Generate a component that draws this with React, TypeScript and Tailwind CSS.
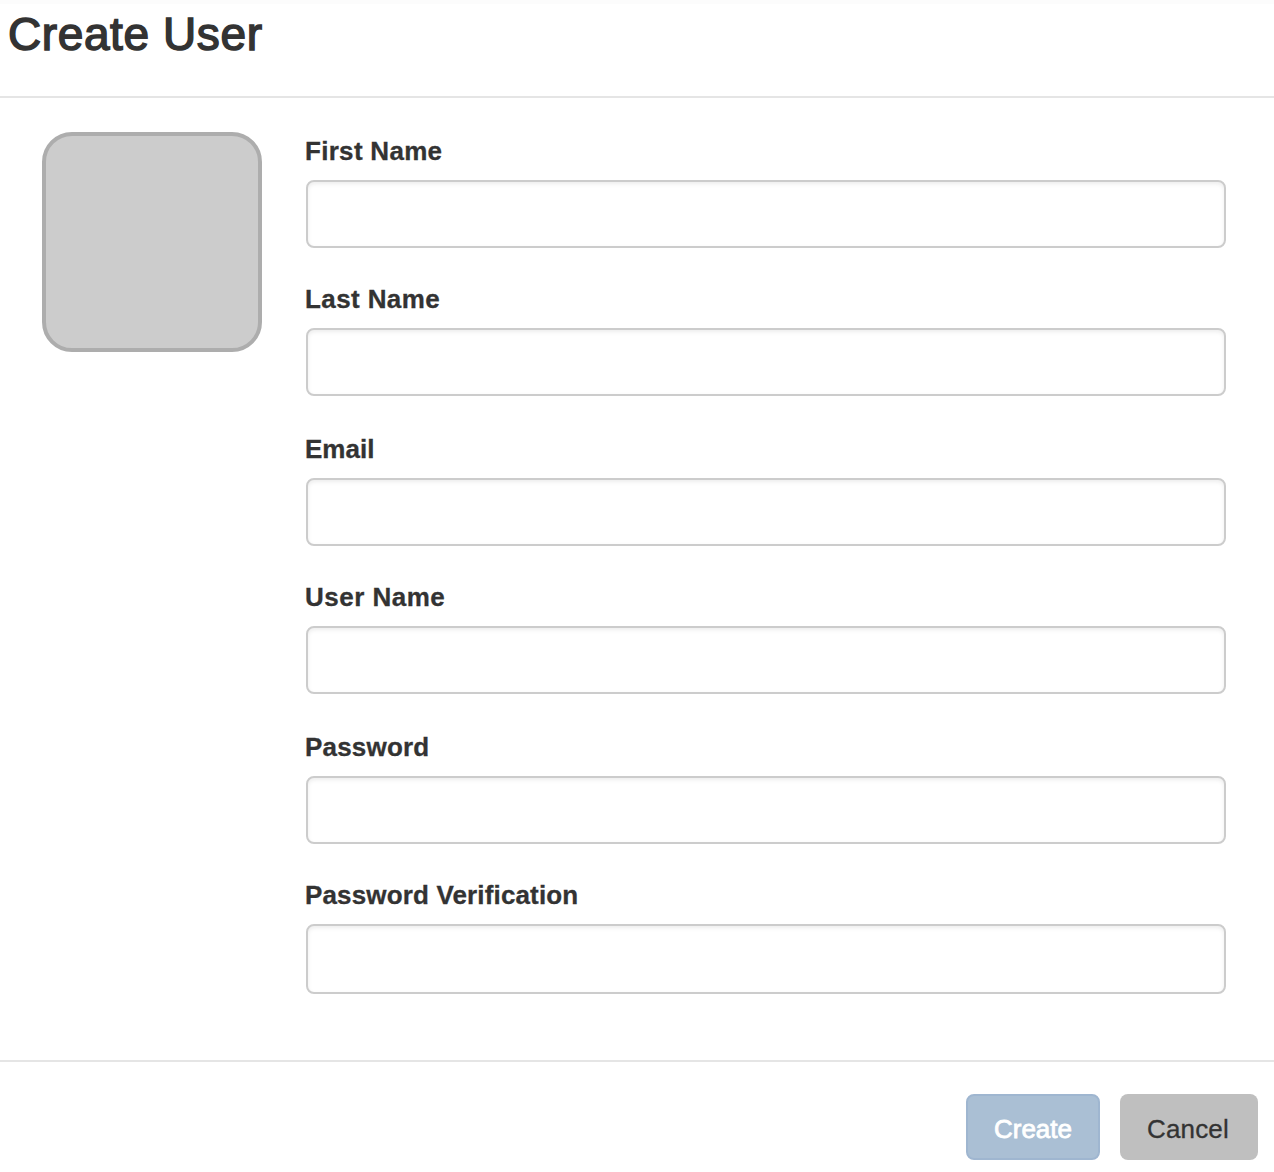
const fields = [
  { id: 'first', label: 'First Name', type: 'text', box: 'mb-8', tracking: 'tracking-[0.3px]', height: 'h-17' },
  { id: 'last', label: 'Last Name', type: 'text', box: 'mb-[34px]', tracking: 'tracking-[0.4px]', height: 'h-17' },
  { id: 'email', label: 'Email', type: 'email', box: 'mb-8', tracking: 'tracking-[0px]', height: 'h-17' },
  { id: 'user', label: 'User Name', type: 'text', box: 'mb-[34px]', tracking: 'tracking-[0.48px]', height: 'h-17' },
  { id: 'password', label: 'Password', type: 'password', box: 'mb-8', tracking: 'tracking-[0.2px]', height: 'h-17' },
  { id: 'verify', label: 'Password Verification', type: 'password', box: '', tracking: 'tracking-[0.15px]', height: 'h-[70px]' },
];

export default function App() {
  return (
    <div className="flex h-[1172px] w-full flex-col overflow-hidden border-t-4 border-[#fcfcfc] bg-white font-['Liberation_Sans',sans-serif] text-[#333]">
      <header className="h-[94px] shrink-0 border-b-2 border-[#e5e5e5] pl-2">
        <h1 className="pt-[3px] text-[46px] leading-[54px] font-normal tracking-[0.6px] whitespace-nowrap [-webkit-text-stroke:1.5px_#333]">
          Create User
        </h1>
      </header>
      <main className="flex h-[964px] shrink-0 border-b-2 border-[#e5e5e5] pt-[34px] pr-12 pl-[42px]">
        <div className="mr-11 size-[220px] shrink-0 rounded-[30px] border-4 border-[#adadad] bg-[#ccc]" />
        <form className="min-w-0 flex-1">
          {fields.map((f) => (
            <div key={f.id} className={f.box}>
              <label
                htmlFor={f.id}
                className={`-ml-px block h-12 text-[26px] leading-[38px] font-bold whitespace-nowrap [-webkit-text-stroke:0.3px_#333] ${f.tracking}`}
              >
                {f.label}
              </label>
              <input
                id={f.id}
                type={f.type}
                className={`block w-full rounded-lg border-2 border-[#ccc] bg-white px-6 text-[26px] shadow-[inset_0_2px_4px_rgba(0,0,0,0.075)] outline-none ${f.height}`}
              />
            </div>
          ))}
        </form>
      </main>
      <footer className="flex justify-end gap-5 pt-8 pr-4">
        <button className="h-[66px] w-[134px] rounded-lg border-2 border-[#9fb6d0] bg-[#aabfd4] pt-1 text-[26px] text-white [-webkit-text-stroke:0.8px_#fff]">
          Create
        </button>
        <button className="h-[66px] w-[138px] rounded-lg bg-[#bfbfbf] pt-1 pr-0.5 text-[26px] tracking-[0.15px] [-webkit-text-stroke:0.3px_#333]">
          Cancel
        </button>
      </footer>
    </div>
  );
}
